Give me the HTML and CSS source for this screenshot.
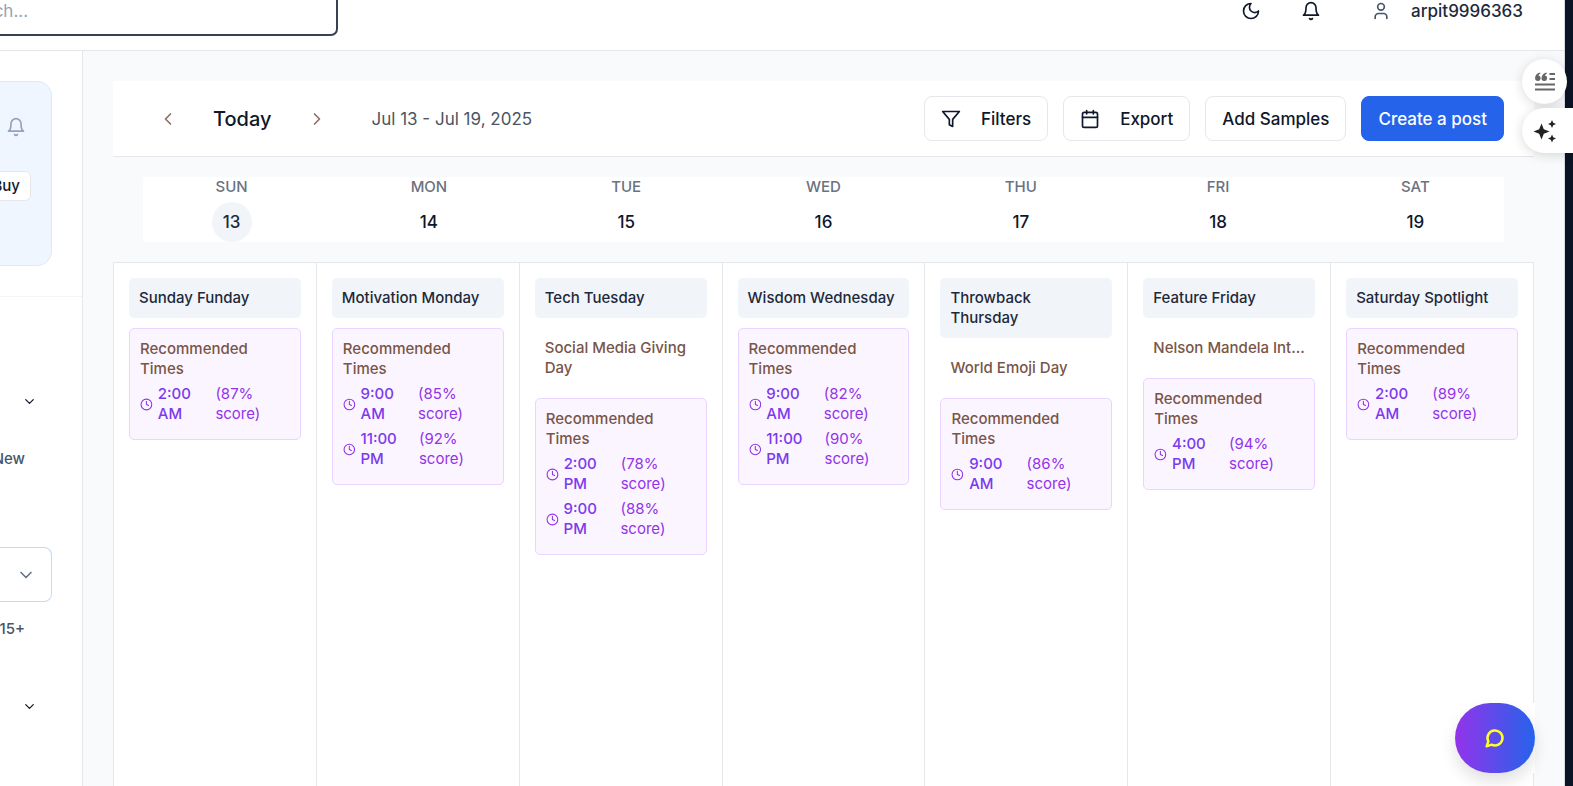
FILE: index.html
```html
<!DOCTYPE html>
<html lang="en">
<head>
<meta charset="utf-8">
<title>Content calendar</title>
<link rel="stylesheet" href="styles.css">
</head>
<body>
<svg class="sprite" aria-hidden="true">
  <symbol id="bell" viewBox="0 0 24 24"><path d="M6 8a6 6 0 0 1 12 0c0 7 3 9 3 9H3s3-2 3-9"/><path d="M10.3 21a1.94 1.94 0 0 0 3.4 0"/></symbol>
  <symbol id="clock" viewBox="0 0 24 24"><circle cx="12" cy="12" r="10"/><path d="M12 6v6l4 2"/></symbol>
  <symbol id="down" viewBox="0 0 24 24"><path d="m6 9 6 6 6-6"/></symbol>
</svg>
<div class="app">
  <header class="topbar">
    <input class="search" type="text" placeholder="Search..." aria-label="Search">
    <div class="account">
      <button class="icon-btn" aria-label="Dark mode"><svg class="icon" viewBox="0 0 24 24"><path d="M12 3a6 6 0 0 0 9 9 9 9 0 1 1-9-9Z"/></svg></button>
      <button class="icon-btn" aria-label="Notifications"><svg class="icon"><use href="#bell"/></svg></button>
      <button class="user"><svg class="icon" viewBox="0 0 24 24"><path d="M19 21v-2a4 4 0 0 0-4-4H9a4 4 0 0 0-4 4v2"/><circle cx="12" cy="7" r="4"/></svg><span>arpit9996363</span></button>
    </div>
  </header>
  <div class="body">
    <aside class="sidebar">
      <section class="promo-wrap">
        <div class="promo">
          <svg class="icon promo-bell"><use href="#bell"/></svg>
          <button class="buy">Buy</button>
        </div>
      </section>
      <nav class="side-nav">
        <button class="group" aria-label="Expand section"><svg class="icon-sm"><use href="#down"/></svg></button>
        <a class="side-link" href="#">New</a>
        <button class="picker" aria-label="Select channel"><svg class="icon"><use href="#down"/></svg></button>
        <a class="side-link" href="#">15+</a>
        <button class="group" aria-label="Expand section"><svg class="icon-sm"><use href="#down"/></svg></button>
      </nav>
    </aside>
    <main class="main">
      <div class="toolbar">
        <div class="pager">
          <button class="step" aria-label="Previous week"><svg class="icon" viewBox="0 0 24 24"><path d="m15 18-6-6 6-6"/></svg></button>
          <button class="today">Today</button>
          <button class="step" aria-label="Next week"><svg class="icon" viewBox="0 0 24 24"><path d="m9 18 6-6-6-6"/></svg></button>
          <span class="range">Jul 13 - Jul 19, 2025</span>
        </div>
        <div class="actions">
          <button class="btn"><svg class="icon" viewBox="0 0 24 24"><path d="M22 3H2l8 9.46V19l4 2v-8.54L22 3z"/></svg>Filters</button>
          <button class="btn"><svg class="icon" viewBox="0 0 24 24"><path d="M8 2v4M16 2v4M3 10h18"/><rect x="3" y="4" width="18" height="18" rx="2"/></svg>Export</button>
          <button class="btn">Add Samples</button>
          <button class="btn primary">Create a post</button>
        </div>
      </div>
      <div class="days">
        <div class="day"><span class="dow">SUN</span><span class="num current">13</span></div>
        <div class="day"><span class="dow">MON</span><span class="num">14</span></div>
        <div class="day"><span class="dow">TUE</span><span class="num">15</span></div>
        <div class="day"><span class="dow">WED</span><span class="num">16</span></div>
        <div class="day"><span class="dow">THU</span><span class="num">17</span></div>
        <div class="day"><span class="dow">FRI</span><span class="num">18</span></div>
        <div class="day"><span class="dow">SAT</span><span class="num">19</span></div>
      </div>
      <div class="week">
        <div class="col">
          <div class="theme">Sunday Funday</div>
          <div class="rec"><div class="rec-title">Recommended Times</div>
            <div class="slot"><svg class="clock"><use href="#clock"/></svg><span class="time">2:00 AM</span><span>(87% score)</span></div>
          </div>
        </div>
        <div class="col">
          <div class="theme">Motivation Monday</div>
          <div class="rec"><div class="rec-title">Recommended Times</div>
            <div class="slot"><svg class="clock"><use href="#clock"/></svg><span class="time">9:00 AM</span><span>(85% score)</span></div>
            <div class="slot"><svg class="clock"><use href="#clock"/></svg><span class="time">11:00 PM</span><span>(92% score)</span></div>
          </div>
        </div>
        <div class="col">
          <div class="theme">Tech Tuesday</div>
          <div class="event">Social Media Giving Day</div>
          <div class="rec"><div class="rec-title">Recommended Times</div>
            <div class="slot"><svg class="clock"><use href="#clock"/></svg><span class="time">2:00 PM</span><span>(78% score)</span></div>
            <div class="slot"><svg class="clock"><use href="#clock"/></svg><span class="time">9:00 PM</span><span>(88% score)</span></div>
          </div>
        </div>
        <div class="col">
          <div class="theme">Wisdom Wednesday</div>
          <div class="rec"><div class="rec-title">Recommended Times</div>
            <div class="slot"><svg class="clock"><use href="#clock"/></svg><span class="time">9:00 AM</span><span>(82% score)</span></div>
            <div class="slot"><svg class="clock"><use href="#clock"/></svg><span class="time">11:00 PM</span><span>(90% score)</span></div>
          </div>
        </div>
        <div class="col">
          <div class="theme">Throwback Thursday</div>
          <div class="event">World Emoji Day</div>
          <div class="rec"><div class="rec-title">Recommended Times</div>
            <div class="slot"><svg class="clock"><use href="#clock"/></svg><span class="time">9:00 AM</span><span>(86% score)</span></div>
          </div>
        </div>
        <div class="col">
          <div class="theme">Feature Friday</div>
          <div class="event">Nelson Mandela Int...</div>
          <div class="rec"><div class="rec-title">Recommended Times</div>
            <div class="slot"><svg class="clock"><use href="#clock"/></svg><span class="time">4:00 PM</span><span>(94% score)</span></div>
          </div>
        </div>
        <div class="col">
          <div class="theme">Saturday Spotlight</div>
          <div class="rec"><div class="rec-title">Recommended Times</div>
            <div class="slot"><svg class="clock"><use href="#clock"/></svg><span class="time">2:00 AM</span><span>(89% score)</span></div>
          </div>
        </div>
      </div>
    </main>
  </div>
</div>
<div class="edge-tools">
  <button class="edge-round" aria-label="Citations"><svg width="20" height="20" viewBox="0 0 20 20"><g fill="#666"><path d="M5 .5C2 1.200 0 3.400 0 6.200A2.800 2.800 0 1 0 3.400 3.500C3.700 2.700 4.300 2.200 5.400 1.800zM11.500 .5C8.500 1.200 6.500 3.400 6.500 6.200A2.800 2.800 0 1 0 9.900 3.500C10.200 2.700 10.800 2.200 11.900 1.800z"/><path d="M14.500 1H20v2h-5.500zM14.500 6H20v2h-5.500zM0 11.500h20v2H0zM0 16.500h20v2H0z"/></g></svg></button>
  <button class="edge-tab" aria-label="Assistant"><svg width="24" height="24" viewBox="0 0 24 24"><path fill="#222" d="M8.500 4.500 10.800 10.200 16.500 12.500 10.800 14.800 8.500 20.500 6.200 14.800.500 12.500 6.200 10.200zM19 1l1.200 2.800L23 5l-2.800 1.200L19 9l-1.200-2.800L15 5l2.800-1.200zM19 15.500l1.200 2.800 2.800 1.200-2.800 1.200L19 23.500l-1.200-2.800-2.800-1.200 2.800-1.200z"/></svg></button>
</div>
<div class="chat-dock">
  <button class="chat" aria-label="Open chat"><svg class="icon" viewBox="0 0 24 24"><path d="M7.900 20A9 9 0 1 0 4 16.100L2 22Z"/></svg></button>
</div>
</body>
</html>
```

FILE: styles.css
```css
* { box-sizing: border-box; }
body {
  margin: 0;
  height: 100vh;
  overflow: hidden;
  background: #0b1424;
  color: #0f172a;
  font: 15px/20px Inter, "Liberation Sans", sans-serif;
}
button {
  display: flex;
  align-items: center;
  justify-content: center;
  margin: 0;
  padding: 0;
  border: 0;
  background: none;
  color: inherit;
  font: inherit;
  cursor: pointer;
}
a { color: inherit; text-decoration: none; }
svg { fill: none; stroke: currentColor; stroke-width: 2; stroke-linecap: round; stroke-linejoin: round; }
.sprite { display: none; }
.icon { width: 20px; height: 20px; flex: none; }
.icon-sm { width: 15px; height: 15px; }

.app {
  display: flex;
  flex-direction: column;
  height: 100vh;
  margin-right: 8px;
  border-right: 1px solid #d8dce2;
  background: #f8fafc;
}
.topbar {
  display: flex;
  align-items: flex-start;
  justify-content: space-between;
  height: 51px;
  flex: none;
  overflow: hidden;
  border-bottom: 1px solid #e5e7eb;
  background: #fff;
}
.search {
  width: 398px;
  height: 50px;
  margin: -14px 0 0 -60px;
  padding: 0 15px;
  border: 2px solid #374151;
  border-radius: 7px;
  background: #fff;
  font: 17px/25px Inter, sans-serif;
}
.search::placeholder { color: #94a3b8; opacity: 1; }
.account { display: flex; gap: 10px; margin-top: -14px; padding-right: 41px; }
.icon-btn { width: 50px; height: 50px; }
.user { gap: 20px; height: 50px; margin-left: 25px; color: #1e293b; font-size: 17px; font-weight: 500; }
.user .icon { color: #475569; }

.body { display: flex; flex: 1; min-height: 0; }
.sidebar {
  width: 83px;
  flex: none;
  overflow: hidden;
  border-right: 1px solid #e5e7eb;
  background: #fff;
}
.promo-wrap { padding: 30px 30px 30px 0; border-bottom: 1px solid #f1f5f9; }
.promo {
  display: flex;
  flex-direction: column;
  align-items: flex-end;
  gap: 34px;
  height: 185px;
  padding: 35px 20px 0 0;
  border: 1px solid #e2e8f0;
  border-left: 0;
  border-radius: 0 15px 15px 0;
  background: #eff6ff;
}
.promo-bell { margin-right: 5px; color: #94a3b8; }
.buy {
  height: 30px;
  padding: 0 10px;
  border: 1px solid #e5e7eb;
  border-radius: 6px;
  background: #fff;
  font-weight: 500;
}
.side-nav { display: flex; flex-direction: column; align-items: flex-end; padding-top: 94px; }
.group { height: 20px; margin-right: 45px; }
.side-link { margin: 38px 57px 0 0; color: #475569; font-weight: 500; }
.picker {
  justify-content: flex-end;
  width: 53px;
  height: 55px;
  margin: 78px 30px 0 0;
  padding-right: 15px;
  border: 1px solid #bfdbfe;
  border-left: 0;
  border-radius: 0 8px 8px 0;
  color: #64748b;
}
.picker + .side-link { margin-top: 17px; }
.side-link + .group { margin-top: 57px; }

.main { display: flex; flex: 1; flex-direction: column; min-width: 0; padding: 30px 30px 0; }
.toolbar {
  display: flex;
  justify-content: space-between;
  padding: 15px 30px;
  border-bottom: 1px solid #e5e7eb;
  background: #fff;
}
.pager, .actions { display: flex; align-items: center; }
.actions { gap: 15px; }
.step { width: 50px; height: 45px; color: #8d6e63; }
.today { padding: 0 20px; font-size: 20px; font-weight: 500; }
.range { margin-left: 30px; color: #4b5563; font-size: 17px; }
.btn {
  gap: 20px;
  height: 45px;
  padding: 0 16px;
  border: 1px solid #e5e7eb;
  border-radius: 8px;
  background: #fff;
  font-size: 17px;
  font-weight: 500;
}
.primary { border-color: #2563eb; background: #2563eb; color: #fff; }

.days {
  display: grid;
  grid-template-columns: repeat(7, 1fr);
  gap: 20px;
  margin: 20px 30px;
  background: #fff;
}
.day { display: flex; flex-direction: column; align-items: center; gap: 5px; }
.dow { color: #6b7280; font-weight: 500; }
.num {
  display: grid;
  place-items: center;
  width: 40px;
  height: 40px;
  border-radius: 50%;
  font-size: 17px;
  font-weight: 500;
}
.current { background: #f1f5f9; color: #1e293b; }

.week {
  display: grid;
  flex: 1;
  grid-template-columns: repeat(7, minmax(0, 1fr));
  border: solid #e5e7eb;
  border-width: 1px 0 0 1px;
  background: #fff;
}
.col {
  display: flex;
  flex-direction: column;
  gap: 10px;
  padding: 15px;
  border-right: 1px solid #e5e7eb;
}
.theme, .event { padding: 10px; border-radius: 5px; font-weight: 500; }
.theme { background: #f1f5f9; color: #1e293b; }
.event { padding-right: 5px; color: #795548; }
.rec { padding: 10px; border: 1px solid #e9d5ff; border-radius: 5px; background: #faf5ff; }
.rec-title { margin-bottom: 5px; color: #795548; font-weight: 500; }
.slot { display: flex; align-items: center; gap: 5px; margin-bottom: 5px; color: #9333ea; }
.time { color: #7c3aed; font-weight: 500; }
.clock { width: 15px; height: 15px; }

.edge-tools {
  position: absolute;
  top: 59px;
  right: 0;
  display: flex;
  flex-direction: column;
  gap: 4px;
  width: 51px;
}
.edge-round, .edge-tab { height: 45px; background: #fff; box-shadow: 0 2px 12px rgba(0, 0, 0, .15); }
.edge-round { width: 45px; border-radius: 50%; }
.edge-tab { width: 51px; padding-right: 6px; border-radius: 23px 0 0 23px; }
.edge-tools svg { stroke: none; }
.chat-dock { position: absolute; right: 38px; bottom: 13px; background: #fff; }
.chat {
  width: 80px;
  height: 70px;
  border-radius: 35px;
  background: linear-gradient(90deg, #9333ea, #2563eb);
  box-shadow: 0 8px 16px rgba(0, 0, 0, .12);
  color: #ffff28;
}
.chat .icon { stroke-width: 3; }
```
